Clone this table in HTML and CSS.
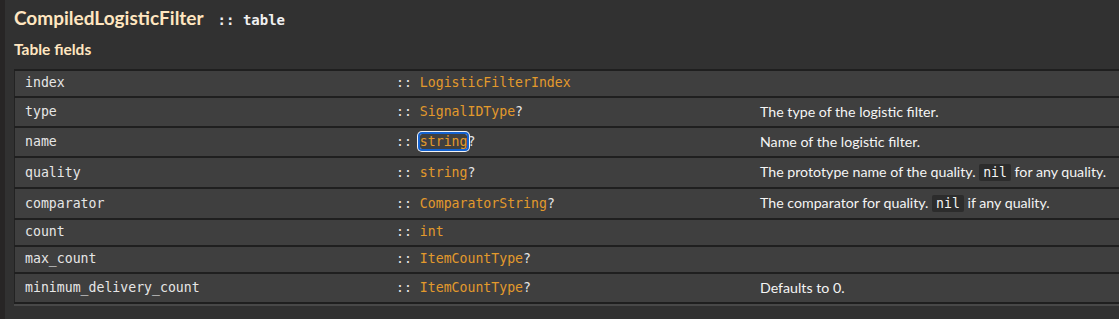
FILE: index.html
```html
<!DOCTYPE html>
<html>
<head>
<meta charset="utf-8">
<link rel="stylesheet" href="styles.css">
</head>
<body>
<div class="page">
  <h3 class="title">CompiledLogisticFilter <span class="kind">:: table</span></h3>
  <h4 class="subtitle">Table fields</h4>
  <table class="fields">
    <tr><td class="name">index</td><td class="type">:: <a class="ty">LogisticFilterIndex</a></td><td class="desc"></td></tr>
    <tr class="tall"><td class="name">type</td><td class="type">:: <a class="ty">SignalIDType</a>?</td><td class="desc">The type of the logistic filter.</td></tr>
    <tr class="tall"><td class="name">name</td><td class="type">:: <a class="ty focus">string</a>?</td><td class="desc">Name of the logistic filter.</td></tr>
    <tr class="tall"><td class="name">quality</td><td class="type">:: <a class="ty">string</a>?</td><td class="desc">The prototype name of the quality. <code>nil</code> for any quality.</td></tr>
    <tr class="tall"><td class="name">comparator</td><td class="type">:: <a class="ty">ComparatorString</a>?</td><td class="desc">The comparator for quality. <code>nil</code> if any quality.</td></tr>
    <tr><td class="name">count</td><td class="type">:: <a class="ty">int</a></td><td class="desc"></td></tr>
    <tr><td class="name">max_count</td><td class="type">:: <a class="ty">ItemCountType</a>?</td><td class="desc"></td></tr>
    <tr class="tall"><td class="name">minimum_delivery_count</td><td class="type">:: <a class="ty">ItemCountType</a>?</td><td class="desc">Defaults to 0.</td></tr>
  </table>
</div>
</body>
</html>
```
FILE: styles.css
```css
html, body {
  margin: 0;
  padding: 0;
  background: #313131;
  overflow: hidden;
}
.page {
  border-left: 5px solid #272525;
  padding: 6px 0 0 9px;
  min-height: 320px;
  box-sizing: border-box;
  font-family: Lato, "Liberation Sans", sans-serif;
  color: #ececec;
}
.title {
  margin: 0;
  font-size: 19px;
  font-weight: 700;
  color: #ffe6c0;
  line-height: 24px;
  display: flex;
  align-items: baseline;
  gap: 14px;
}
.kind {
  font-family: "DejaVu Sans Mono", monospace;
  font-size: 14px;
  font-weight: 700;
  color: #f0f0f0;
}
.subtitle {
  margin: 7px 0 0;
  font-size: 15.5px;
  font-weight: 700;
  color: #ffe6c0;
  line-height: 20px;
}
.fields {
  margin-top: 10px;
  width: 1120px;
  border-collapse: collapse;
  border-left: 1px solid #232323;
  border-bottom: 2px solid #1f1f1f;
  box-shadow: 0 2px 0 #484848;
}
.fields tr {
  background: #3f3f3f;
  border-top: 2px solid #1f1f1f;
}
.fields td {
  padding: 4px 0 5px 10px;
  vertical-align: middle;
  line-height: 16px;
}
.fields tr.tall td {
  padding-top: 6px;
  padding-bottom: 6px;
}
.name, .type {
  font-family: "DejaVu Sans Mono", monospace;
  font-size: 13.2px;
  color: #e6e6e6;
}
.name { width: 361px; }
.type { width: 354px; }
.ty {
  color: #e39a2c;
  text-decoration: none;
}
.focus {
  outline: 2px solid #1462d0;
  box-shadow: 0 0 0 3px #f4f4f4;
  border-radius: 2px;
}
.desc {
  font-size: 14.2px;
  color: #f4f4f4;
}
code {
  font-family: "DejaVu Sans Mono", monospace;
  font-size: 13.2px;
  background: #2c2c2c;
  padding: 1px 4px;
  border-radius: 2px;
}
```
